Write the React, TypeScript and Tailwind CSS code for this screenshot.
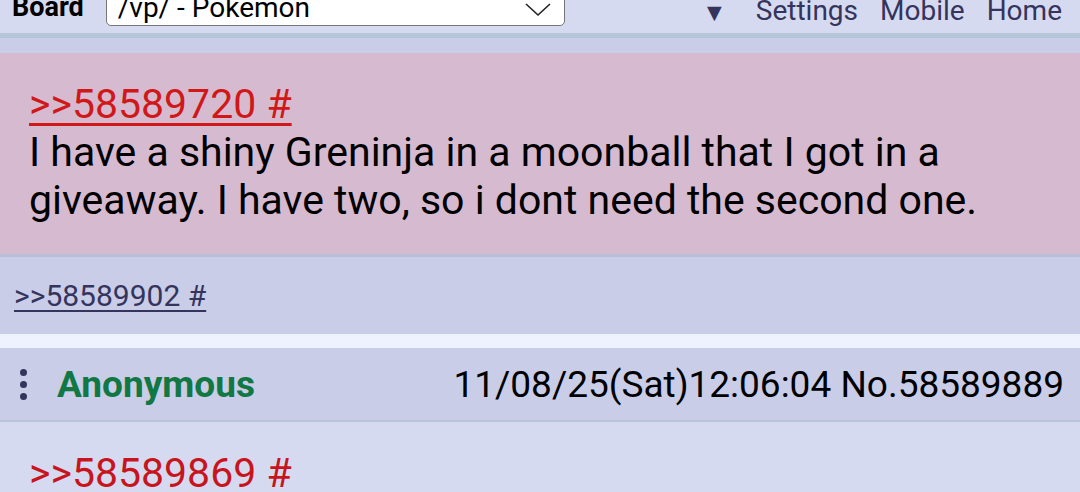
import React from 'react';

const font = { fontFamily: 'Roboto, "Noto Sans", sans-serif' };

function TopBar() {
  return (
    <div className="h-[33px] overflow-hidden bg-[#d6daf0] border-b-[5px] border-[#b7c5d9] box-content">
      <div className="flex items-start h-[33px] pl-3 pr-[18px]">
        <span className="text-[27px] font-bold text-black leading-none -mt-[6px]">Board</span>
        <div className="ml-[22px] -mt-[6px] w-[459px] h-[32px] bg-white border border-[#767676] rounded-b-[5px] flex items-start justify-between pl-[11px] pr-[13px]">
          <span className="text-[28px] text-black leading-none -mt-[1px]">/vp/ - Pokemon</span>
          <svg width="26" height="14" viewBox="0 0 26 14" className="mt-[8px]">
            <path d="M1 1 L13 12 L25 1" fill="none" stroke="#222" strokeWidth="1.6" />
          </svg>
        </div>
        <div className="ml-auto flex items-start gap-[22px] text-[28px] text-[#34345c] leading-none -mt-[3px]">
          <span className="text-[25px] mr-[7px] mt-[3px]">▼</span>
          <span>Settings</span>
          <span>Mobile</span>
          <span>Home</span>
        </div>
      </div>
    </div>
  );
}

export default function App() {
  return (
    <div className="w-[1080px] h-[492px] overflow-hidden bg-[#d6daf0]" style={font}>
      <TopBar />
      <div className="h-[15px] bg-[#c9cde8]" />

      {/* highlighted quoted post */}
      <div className="h-[204px] bg-[#d6bad0] border-b-[3px] border-[#b9bfd6] px-[29px] pt-[27px] box-border">
        <a className="text-[41px] leading-[48px] text-[#d01818] underline underline-offset-[5px] decoration-[3px] block w-fit">&gt;&gt;58589720 #</a>
        <p className="text-[41px] leading-[48px] text-black">
          I have a shiny Greninja in a moonball that I got in a giveaway. I have two, so i dont need the second one.
        </p>
      </div>

      <div className="h-[77px] bg-[#c9cde8] px-[14px] flex items-center">
        <a className="text-[30px] leading-none text-[#34345c] underline underline-offset-[4px] decoration-[2px]">&gt;&gt;58589902 #</a>
      </div>

      <div className="h-[14px] bg-[#eef2ff]" />

      <div className="h-[74px] bg-[#c9cde8] border-b-[2px] border-[#b7c5d9] flex items-center pl-[20px] pr-[16px]">
        <div className="flex flex-col gap-[5px] mr-[30px]">
          <span className="w-[7px] h-[7px] rounded-full bg-[#34345c]" />
          <span className="w-[7px] h-[7px] rounded-full bg-[#34345c]" />
          <span className="w-[7px] h-[7px] rounded-full bg-[#34345c]" />
        </div>
        <span className="text-[37px] leading-none font-bold text-[#117743]">Anonymous</span>
        <span className="ml-auto text-[37px] leading-none text-black">11/08/25(Sat)12:06:04 No.58589889</span>
      </div>

      <div className="px-[29px] pt-[27px]">
        <a className="text-[41px] leading-[48px] text-[#c8141c] underline underline-offset-[5px] decoration-[3px]">&gt;&gt;58589869 #</a>
      </div>
    </div>
  );
}
